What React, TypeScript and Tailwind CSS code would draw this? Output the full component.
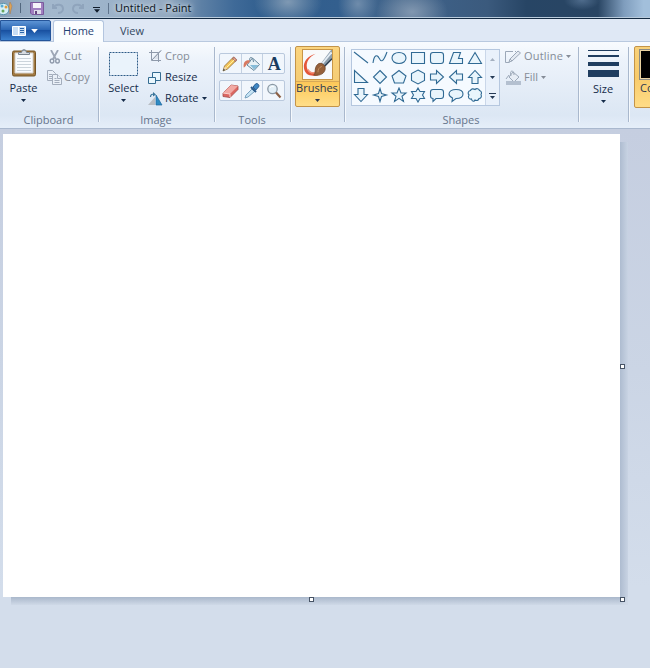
import React from 'react';

interface ToolLabelProps {
  label: string;
  icon: React.ReactNode;
  disabled?: boolean;
  arrow?: boolean;
  className?: string;
}

const Arrow = ({ className = '' }: { className?: string }) => (
  <svg className={`h-[3px] w-[5px] shrink-0 ${className}`} viewBox="0 0 5 3" fill="currentColor">
    <path d="M0 0h5L2.5 3z" />
  </svg>
);

const ToolLabel: React.FC<ToolLabelProps> = ({ label, icon, disabled, arrow, className = '' }) => (
  <div className={`flex h-[21px] items-center ${disabled ? 'text-[#858c97]' : 'text-[#152c4a]'} ${className}`}>
    <span className="flex w-[17px] shrink-0 items-center">{icon}</span>
    <span className="whitespace-nowrap">{label}</span>
    {arrow && <Arrow className="ml-[3px]" />}
  </div>
);

interface GroupProps {
  label?: string;
  className: string;
  children: React.ReactNode;
}

const Group: React.FC<GroupProps> = ({ label, className, children }) => (
  <section className={`flex h-[86px] shrink-0 flex-col ${className}`}>
    <div className="flex h-[70px] shrink-0">{children}</div>
    <div className="h-4 pr-px text-center leading-4 text-[#66758c]">{label}</div>
  </section>
);

const Separator = () => (
  <div className="mt-[5px] h-[75px] w-px shrink-0 bg-[#a9b8cd] shadow-[1px_0_0_#f5f9fd]" />
);

const PasteIcon = () => (
  <svg className="h-[30px] w-[26px]" viewBox="0 0 26 30">
    <rect x="1.5" y="4" width="23" height="25" rx="1.5" fill="#a27a43" stroke="#775626" />
    <path d="M4 6h18v20H4z" fill="#f9fcff" stroke="#d6d3ce" />
    <path d="M6 11.5h14M6 14.5h14M6 17.5h14M6 20.5h14M6 23.5h14" stroke="#cbd4dc" />
    <path d="M7.500 7.500V5.500h3L11.500 3h3l1 2.500h3v2z" fill="#d7dce2" stroke="#7b8590" />
    <path d="M11.500 4q1.500-3 3 0" fill="none" stroke="#7b8590" />
  </svg>
);

const CutIcon = () => (
  <svg className="ml-[2px] h-[14px] w-[12px]" viewBox="0 0 12 14" fill="none">
    <path d="M2 0l4.8 9M9 0L4 9" stroke="#9da6b5" strokeWidth="1.8" />
    <ellipse cx="3" cy="11" rx="1.8" ry="2" stroke="#919cad" strokeWidth="1.4" />
    <ellipse cx="8.5" cy="11" rx="1.8" ry="2" stroke="#919cad" strokeWidth="1.4" />
  </svg>
);

const CopyIcon = () => (
  <svg className="h-[15px] w-[15px]" viewBox="0 0 15 15" fill="#eaf0f8" stroke="#a3adbc">
    <path d="M.5.5h5L8.500 3.500v7h-8z" />
    <path d="M2 4.500h3M2 6.500h3M2 8.500h3" />
    <path d="M5.500 4.500h5l4 4v6h-9z" />
    <path d="M10.500 4.500v4h4M7.500 8.500h2M7.500 10.500h5M7.500 12.500h5" />
  </svg>
);

const CropIcon = () => (
  <svg className="ml-px h-[13px] w-[13px]" viewBox="0 0 13 13" fill="none" stroke="#8f9aab">
    <path d="M2.500 0v10.500H12M0 2.500h9.500V12M3 10L12 .5" />
    <path d="M4 9h5V4z" fill="#dce2eb" stroke="none" />
    <path d="M3 10L12 .5" />
  </svg>
);

const ResizeIcon = () => (
  <svg className="h-[12px] w-[14px]" viewBox="0 0 14 12" fill="#eaf7fd" stroke="#356c91">
    <path d="M4.500.5h8v8h-8z" />
    <path d="M.5 5.500h7v6h-7z" />
  </svg>
);

const RotateIcon = () => (
  <svg className="h-[14px] w-[15px]" viewBox="0 0 15 14">
    <path d="M7 5v8H0z" fill="#b9bec4" />
    <path d="M8 3v10h6z" fill="#2e8bc3" stroke="#1f679e" strokeWidth=".7" />
    <path d="M2.500 5c0-3 2-3 4-2.500" fill="none" stroke="#3b7599" strokeWidth="1.200" />
    <path d="M5 0l3 2.500-3 2z" fill="#3b7599" />
  </svg>
);

const PencilIcon = () => (
  <svg className="h-[16px] w-[16px]" viewBox="0 0 16 16">
    <path d="M1 15l1.500-5L11 1.500l3.200 3L5.500 13z" fill="#f5c55a" stroke="#8e6d35" strokeWidth=".8" />
    <path d="M10 2.500l3.200 3L15 4 12 .8z" fill="#d38d80" stroke="#8a5a4f" strokeWidth=".6" />
    <path d="M3 10.500l2 2L1 15z" fill="#efd9b5" />
    <path d="M1 15l.7-2.200L3 14z" fill="#202d3b" />
    <path d="M4.500 11.500l8-8" stroke="#fff1a0" />
  </svg>
);

const BucketIcon = () => (
  <svg className="h-[16px] w-[18px]" viewBox="0 0 18 16">
    <path d="M9.500 2l7 6.500-5.500 6-7-5.500z" fill="#e7f1f6" stroke="#66879c" />
    <path d="M7 5.500C5.500 0 10 0 10.500 6" fill="none" stroke="#63849b" />
    <path d="M7 9h8.500L11 13.500z" fill="#86bcd9" />
    <path d="M7 4.500C3 3.500 0 6 .7 11.500c2.300 0 2-4 5.300-4.500z" fill="#d87a62" />
  </svg>
);

const EraserIcon = () => (
  <svg className="h-[16px] w-[17px]" viewBox="0 0 17 16">
    <path d="M1 10l8-8 7 1v3.500L8 14.500l-7-1z" fill="#dc6761" stroke="#a24b49" strokeWidth=".8" />
    <path d="M1 10l8-8 7 1-8 8z" fill="#f1aaa4" />
    <path d="M1 10l7 1v3" fill="none" stroke="#fad1cc" />
  </svg>
);

const DropperIcon = () => (
  <svg className="h-[16px] w-[16px]" viewBox="0 0 16 16">
    <path d="M1 15l1-3 6-6 2.500 2.500L4 14z" fill="#c6e3f4" stroke="#6d9ab9" strokeWidth=".9" />
    <path d="M9 4l2.500-3C13-.5 16 2 14.500 4l-2.700 3z" fill="#3f87c4" stroke="#23598f" />
    <path d="M7 4l5 5" stroke="#27588a" strokeWidth="2" />
  </svg>
);

const MagnifierIcon = () => (
  <svg className="h-[16px] w-[16px]" viewBox="0 0 16 16">
    <circle cx="6.500" cy="6" r="4.700" fill="#e2eff7" stroke="#8b99a5" strokeWidth="1.300" />
    <path d="M4 5c.5-2 3-2 4-1" fill="none" stroke="#fff" />
    <path d="M10 9.500l4.500 5" stroke="#8c6044" strokeWidth="2.200" />
  </svg>
);

const toolRows = [
  [<PencilIcon />, <BucketIcon />, <span className="pl-px pt-px font-['Liberation_Serif',serif] text-[18px] leading-5 font-bold text-[#193c60]">A</span>],
  [<EraserIcon />, <DropperIcon />, <MagnifierIcon />],
];

// each outline lives in a 16x16 box
const shapes = [
  'M1 2L15 13',
  'M1 13C2 5 5 4 7 8s4 5 8-6',
  'M8 2.500c4 0 7 2.300 7 5.500s-3 5.500-7 5.500S1 11.200 1 8s3-5.500 7-5.500z',
  'M1.500 2.500h13v11h-13z',
  'M4 2.500h8q2.500 0 2.500 2.500v6q0 2.500-2.500 2.500H4Q1.500 13.500 1.500 11V5Q1.500 2.500 4 2.500z',
  'M5.500 2.500h7l-2 6h4v5h-13z',
  'M8 2.500l6.500 11h-13z',
  'M1.500 1.500v12h13z',
  'M8 1.500l6.500 6.500L8 14.500 1.500 8z',
  'M8 1.500l7 5.500-2.500 7h-9L1 7z',
  'M8 1L14.500 4.500v7L8 15 1.500 11.500v-7z',
  'M1.500 5h6V1.500l7 6.500-7 6.500V11h-6z',
  'M14.500 5h-6V1.500L1.500 8l7 6.500V11h6z',
  'M5 14.500V8.500H1.500L8 1.500l6.500 7H11v6z',
  'M5 1.500v6H1.500L8 14.500l6.500-7H11v-6z',
  'M8 1.500l1.500 5L14.500 8l-5 1.500L8 14.500l-1.500-5L1.500 8l5-1.500z',
  'M8 1l2 5h5l-4 3.300L12.500 14.500 8 11.300 3.500 14.500 5 9.300 1 6h5z',
  'M8 1l2 3.500h4.500L12.500 8l2 3.500H10L8 15l-2-3.500H1.500l2-3.500-2-3.500H6z',
  'M4 2.500h8q2.500 0 2.500 2.500v4q0 2.500-2.500 2.500H7l-3 3v-3q-2.500 0-2.500-2.500V5Q1.500 2.500 4 2.500z',
  'M8 2.500c4 0 7 1.500 7 4.500s-3 4.500-7 4.500l-4 3 .5-3.500C2.500 10 1 9 1 7c0-3 3-4.500 7-4.500z',
  'M3.500 3.500C4 1.500 6.500 1.500 8 2.500c1.500-1.500 4-1 4.500 1C14.500 4 15 6 14 7.500c1 2 0 4-2 4-.5 2-2.500 2.500-4 1.500-.5 1.500-3 2-3.500-1-2.500.5-4-2-2.500-4C.5 6.500 1 4 3.500 3.500z',
];

const ShapeGallery = () => (
  <div className="mt-[7px] ml-[6px] flex h-[57px] w-[149px] border border-[#b5c7df] bg-[#f5faff]">
    <div className="grid flex-1 grid-cols-[repeat(7,19px)] grid-rows-[repeat(3,18.700px)] content-start">
      {shapes.map((d) => (
        <svg key={d} className="h-4 w-[18px]" viewBox="-1 0 18 16" fill="#e9f5fc" stroke="#306a94" strokeWidth="1.100">
          <path d={d} />
        </svg>
      ))}
    </div>
    <div className="flex w-[14px] flex-col items-center border-l border-[#cad7e9] bg-[#e9f1fb] text-[#263b57]">
      <span className="flex h-[18px] w-full items-center justify-center text-[#a4b0c0]">
        <svg className="h-[3px] w-[5px]" viewBox="0 0 5 3" fill="currentColor"><path d="M0 3h5L2.500 0z" /></svg>
      </span>
      <span className="flex h-[19px] items-center"><Arrow /></span>
      <span className="flex h-[17px] flex-col items-center justify-center gap-[2px]">
        <span className="h-px w-[7px] bg-[#263b57]" />
        <Arrow />
      </span>
    </div>
  </div>
);

const BrushIcon = () => (
  <svg className="h-[31px] w-[31px] shrink-0 border border-[#c89647] bg-[#f8fafb]" viewBox="0 0 30 30">
    <path d="M13 4C5 6 0 12 1 19c1 7 7 9 15 7l-2-4c-5 2-9 1-10-4C3 12 7 7 13 4z" fill="#e4573a" />
    <path d="M5 20c2 4 6 4 9 3" fill="none" stroke="#f3937a" strokeWidth="1.500" />
    <path d="M18.500 14L29 0h1v9l-7 8z" fill="#8d9eac" />
    <path d="M22 17l8-8" stroke="#2c3d50" strokeWidth="1.500" />
    <path d="M20 14L29.500 2.500" stroke="#e4edf4" strokeWidth="1.800" />
    <path d="M11 26c3-2 0-7 4-11 3-3 8 0 8 4 0 5-5 8-12 7z" fill="#96613a" stroke="#6f4527" strokeWidth=".8" />
    <path d="M15.500 23c0-3 1-5 4-6" stroke="#c4905f" fill="none" />
  </svg>
);

const OutlineIcon = () => (
  <svg className="h-[14px] w-[17px]" viewBox="0 0 17 14" fill="none" stroke="#9ca8b8">
    <path d="M8 1.500H.5v11h4M10 1.500h1" />
    <path d="M4 12l1-3 8-8 2.500 2-8.500 8z" fill="#e4eaf2" />
    <path d="M5 9l2 2" />
  </svg>
);

const FillIcon = () => (
  <svg className="h-[15px] w-[17px]" viewBox="0 0 17 15" fill="none" stroke="#9ca8b8">
    <path d="M8 2l6 5-5 5-5-5z" fill="#e7edf5" />
    <path d="M6 6C4 0 9-1 9 5M4 5L1 9" />
    <path d="M1 11h15v4H1z" fill="#b4c0d0" stroke="none" />
  </svg>
);

const TitleBar = () => (
  <header className="flex h-[19px] items-start overflow-hidden border-b border-[#142b43] bg-[radial-gradient(ellipse_34px_24px_at_288px_2px,#7f99b3,transparent),radial-gradient(ellipse_20px_22px_at_358px_4px,#6f8cab,transparent),radial-gradient(ellipse_36px_24px_at_412px_12px,#8197b0,transparent),radial-gradient(ellipse_18px_10px_at_582px_0px,#4f6c8c,transparent),linear-gradient(90deg,#8ba0b7_0%,#a3b8cd_8%,#9bb2c9_18%,#93a9c0_26%,#5d80a5_31%,#3f6a98_36%,#2f5d8d_41%,#335f8e_52%,#46678b_62%,#3d5f85_68%,#3b5a7d_75%,#274565_81%,#294563_92%,#7f9dbd_96%,#a2bfdb_99%)] shadow-[inset_0_-1px_0_#b9cbdc]">
    <svg className="-ml-px mt-[1px] h-[14px] w-[14px] shrink-0" viewBox="0 0 14 14">
      <path d="M0 4c3-3 10-2 10 4s-7 7-10 4z" fill="#d6eef6" stroke="#5792ae" />
      <circle cx="3" cy="5" r="1.500" fill="#58a9d2" />
      <circle cx="7" cy="6" r="1.500" fill="#e09b3c" />
      <circle cx="4" cy="10" r="1.500" fill="#68a55c" />
      <path d="M11 1l2 4-2 8-1-8z" fill="#e0a354" stroke="#a47b52" strokeWidth=".5" />
    </svg>
    <span className="mt-[3px] ml-[7px] h-[10px] w-px bg-[#52677e]" />
    <svg className="mt-[2px] ml-[9px] h-[13px] w-[14px] shrink-0" viewBox="0 0 14 13">
      <path d="M.5.5h13v12H2l-1.500-1.500z" fill="#a17fc0" stroke="#7a5a9c" />
      <path d="M3 1h8v5H3z" fill="#f6f3fa" />
      <path d="M4 8h7v4H4z" fill="#dedce9" />
      <path d="M5 9h2v3H5z" fill="#64457e" />
    </svg>
    <svg className="mt-[3px] ml-[8px] h-[11px] w-[12px] shrink-0" viewBox="0 0 12 11" fill="none" stroke="#8fa4bc" strokeWidth="2">
      <path d="M1 1v4h4M1 5c3-5 10-4 10 1 0 3-3 4-5 4" />
    </svg>
    <svg className="mt-[3px] ml-[8px] h-[11px] w-[12px] shrink-0" viewBox="0 0 12 11" fill="none" stroke="#8fa4bc" strokeWidth="2">
      <path d="M11 1v4H7M11 5C8 0 1 1 1 6c0 3 3 4 5 4" />
    </svg>
    <span className="mt-[7px] ml-[9px] flex w-[7px] flex-col items-center gap-px text-[#111d2b]">
      <span className="h-px w-full bg-current" />
      <Arrow className="h-[4px] w-[6px]" />
    </span>
    <span className="mt-[3px] ml-[8px] h-[11px] w-px bg-[#60758d]" />
    <h1 className="ml-[6px] text-[11px] leading-[16px] whitespace-nowrap text-[#0b1522] [text-shadow:0_0_6px_#d5dfe9,0_0_4px_#d5dfe9]">Untitled - Paint</h1>
  </header>
);

const Tabs = () => (
  <nav className="flex h-[23px] items-end border-b border-[#b9c9df] bg-[#dfe8f5]">
    <button className="flex h-[21px] w-[51px] items-center rounded-tr-[2px] border border-[#25559a] bg-[linear-gradient(#5d94d5,#2863b1_49%,#1951a1_50%,#3d82cf)] text-white">
      <svg className="ml-[11px] h-[10px] w-[14px]" viewBox="0 0 14 10">
        <path d="M.5.500h13v9H.500z" fill="#c7ddf4" stroke="#fff" />
        <path d="M6.500 1v8" stroke="#fff" />
        <path d="M8 2.500h4M8 4.500h4M8 6.500h4" stroke="#2b65aa" />
      </svg>
      <Arrow className="ml-[5px] h-[4px] w-[7px]" />
    </button>
    <button className="-mb-px ml-[2px] h-[22px] w-[51px] rounded-t-[3px] border border-b-0 border-[#b3c5df] bg-[#fafdff] text-[#1f4274]">Home</button>
    <button className="ml-[16px] h-[20px] text-[#33475f]">View</button>
  </nav>
);

const Ribbon = () => (
  <div className="flex h-[87px] overflow-hidden border-b border-[#a9b8ce] bg-[linear-gradient(#f8fbfe_0%,#edf3fb_20%,#dfe9f5_72%,#dce7f4_85%,#e5eef9_100%)]">
    <Group label="Clipboard" className="w-[98px]">
      <div className="flex w-[47px] flex-col items-center pt-[5px] text-[#152c4a]">
        <PasteIcon />
        <span className="mt-[3px] leading-4">Paste</span>
        <Arrow className="mt-[3px]" />
      </div>
      <div className="pt-[4px]">
        <ToolLabel label="Cut" icon={<CutIcon />} disabled />
        <ToolLabel label="Copy" icon={<CopyIcon />} disabled />
      </div>
    </Group>
    <Separator />
    <Group label="Image" className="w-[115px]">
      <div className="flex w-[49px] flex-col items-center pt-[10px] text-[#152c4a]">
        <svg className="h-[25px] w-[29px]" viewBox="0 0 29 25"><path d="M.5.5h28v23H.5z" fill="#eaf3fb" stroke="#2c5a86" strokeDasharray="2 1" /></svg>
        <span className="mt-[3px] leading-4">Select</span>
        <Arrow className="mt-[3px]" />
      </div>
      <div className="pt-[4px]">
        <ToolLabel label="Crop" icon={<CropIcon />} disabled />
        <ToolLabel label="Resize" icon={<ResizeIcon />} />
        <ToolLabel label="Rotate" icon={<RotateIcon />} arrow />
      </div>
    </Group>
    <Separator />
    <Group label="Tools" className="w-[75px]">
      <div className="flex flex-col gap-[6px] pt-[11px] pl-[4px]">
        {toolRows.map((row, i) => (
          <div key={i} className="flex h-[21px] w-[66px] divide-x divide-[#c3d0e1] rounded-[2px] border border-[#bac9dd] bg-[#f1f6fc]">
            {row.map((icon, j) => (
              <span key={j} className="flex flex-1 items-center justify-center">{icon}</span>
            ))}
          </div>
        ))}
      </div>
    </Group>
    <Separator />
    <Group className="w-[53px]">
      <div className="mt-[4px] ml-[4px] flex h-[61px] w-[45px] flex-col items-center rounded-[2px] border border-[#c39449] bg-[linear-gradient(#fbd47e,#f5cd75_55%,#fcc859_60%,#ffde89)] pt-[2px] text-[#2c3850]">
        <BrushIcon />
        <span className="mt-px w-full border-t border-[#d8a956] text-center leading-[14px]">
          <span className="-mt-px -ml-px block">Brushes</span>
        </span>
        <Arrow className="mt-[4px]" />
      </div>
    </Group>
    <Separator />
    <Group label="Shapes" className="w-[233px]">
      <ShapeGallery />
      <div className="ml-[5px] pt-[4px]">
        <ToolLabel label="Outline" icon={<OutlineIcon />} className="tracking-[0.2px] [&>span:first-child]:w-[19px]" disabled arrow />
        <ToolLabel label="Fill" icon={<FillIcon />} className="[&>span:first-child]:w-[19px]" disabled arrow />
      </div>
    </Group>
    <Separator />
    <Group className="w-[49px]">
      <div className="flex w-full flex-col items-center pt-[8px] pr-px text-[#152c4a]">
        <div className="h-px w-[31px] bg-[#1f3d60]" />
        <div className="mt-[4px] h-[2px] w-[31px] bg-[#1f3d60]" />
        <div className="mt-[5px] h-[4px] w-[31px] bg-[#1f3d60]" />
        <div className="mt-[4px] h-[7px] w-[31px] bg-[#1f3d60]" />
        <span className="mt-[4px] leading-4">Size</span>
        <Arrow className="mt-[3px]" />
      </div>
    </Group>
    <Separator />
    <div className="mt-[4px] ml-[5px] h-[62px] w-[44px] shrink-0 rounded-[2px] border border-[#c39449] bg-[linear-gradient(#f8d17a,#f8cb6c_50%,#ffdc86)] pt-[2px] pl-[4px] text-[#2c3850]">
      <div className="h-[31px] w-[31px] border border-[#8b8b83] bg-black outline outline-[#ead3a1] -outline-offset-2" />
      <span className="ml-px block leading-4">Color 1</span>
    </div>
  </div>
);

const Handle = ({ className }: { className: string }) => (
  <span className={`absolute h-[5px] w-[5px] border border-[#465365] bg-white ${className}`} />
);

export default function App() {
  return (
    <div className="flex h-[668px] w-[650px] flex-col overflow-hidden bg-[#d3dcea] font-['Open_Sans','Noto_Sans',sans-serif] text-[11px]">
      <TitleBar />
      <Tabs />
      <Ribbon />
      <main className="flex-1 bg-[linear-gradient(#c5cee0,#cbd5e5_45%,#d3ddeb_85%)] pt-[5px] pl-[3px]">
        <div className="relative grid w-[625px] grid-cols-[617px_8px] grid-rows-[463px_8px]">
          <div className="bg-white" />
          <div className="mt-[8px] bg-linear-to-r from-[#aebcd0] to-[#c8d3e3]" />
          <div className="ml-[8px] bg-linear-to-b from-[#aab8cb] to-[#cfd9e7]" />
          <div className="bg-[radial-gradient(circle_at_top_left,#aab8cb,#cfd9e7_8px)]" />
          <Handle className="top-[230px] left-[617px]" />
          <Handle className="top-[463px] left-[306px]" />
          <Handle className="top-[463px] left-[617px]" />
        </div>
      </main>
    </div>
  );
}
